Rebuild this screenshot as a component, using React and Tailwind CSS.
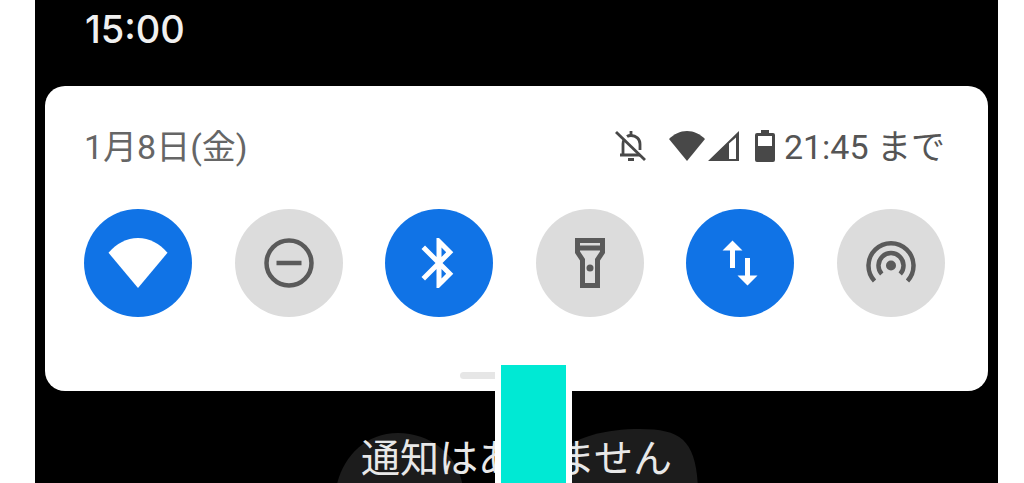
import React from 'react';

const tiles = [
  {
    id: 'wifi',
    label: 'Wi-Fi',
    active: true,
    icon: <path d="M12 22L.2 7.9C3.4 4.2 7.4 2 12 2s8.6 2.2 11.8 5.9L12 22z" />,
  },
  {
    id: 'dnd',
    label: 'サイレント モード',
    active: false,
    icon: (
      <g fill="none" stroke="currentColor" strokeWidth="1.8">
        <circle cx="12" cy="12" r="9" />
        <path d="M7 12h10" />
      </g>
    ),
  },
  {
    id: 'bluetooth',
    label: 'Bluetooth',
    active: true,
    icon: (
      <path d="M17.71 7.71L12 2h-1v7.59L6.41 5 5 6.41 10.59 12 5 17.59 6.41 19 11 14.41V22h1l5.71-5.71-4.3-4.29 4.3-4.29zM13 5.83l1.88 1.88L13 9.59V5.83zm1.88 10.46L13 18.17v-3.76l1.88 1.88z" />
    ),
  },
  {
    id: 'flashlight',
    label: 'ライト',
    active: false,
    icon: (
      <>
        <path d="M6 2v6l2 3v11h8V11l2-3V2H6zm10 2v1H8V4h8zm-2 6.4V20h-4v-9.6L8 7.39V7h8v.39l-2 3.01z" />
        <circle cx="12" cy="14" r="1.4" />
      </>
    ),
  },
  {
    id: 'data',
    label: 'モバイルデータ',
    active: true,
    icon: <path d="M16 17.01V10h-2v7.01h-3L15 21l4-3.99h-3zM9 3L5 6.99h3V14h2V6.99h3L9 3z" />,
  },
  {
    id: 'hotspot',
    label: 'アクセス ポイント',
    active: false,
    icon: (
      <>
        <circle cx="12" cy="13" r="2" />
        <path
          fill="none"
          stroke="currentColor"
          strokeWidth="1.8"
          d="M8.3 16.4a5 5 0 1 1 7.4 0M5.4 19.2a9 9 0 1 1 13.2 0"
        />
      </>
    ),
  },
];

const StatusIcons = () => (
  <div className="flex items-center pb-[2px] text-[#484848]">
    <svg className="mr-5 h-9 w-9" viewBox="0 0 36 36" fill="none" stroke="currentColor" strokeWidth="2.8">
      <path d="M3 4l29 28" />
      <path d="M7 27h20M10 26V16c0-2 .6-3.6 1.6-4.8M14 8.5c1-.7 2.400-1 4-1 5 0 9 3.500 9 8.500v6" />
      <path d="M18 3v5M15 31.5h6" />
    </svg>
    <svg className="mr-[3px] h-[30px] w-9" viewBox="0 0 36 30" fill="currentColor">
      <path d="M18 30L0 8C5 3 11 0 18 0s13 3 18 8L18 30z" />
    </svg>
    <svg className="mr-4 h-[30px] w-[31px]" viewBox="0 0 31 30" fill="currentColor">
      <path fillRule="evenodd" d="M0 30L31 0v30H0zM21 12.5V28h7V6.5L21 12.5z" />
    </svg>
    <svg className="mr-[9px] h-8 w-5" viewBox="0 0 20 32" fill="currentColor">
      <path fillRule="evenodd" d="M6 0h8v3h4a2 2 0 0 1 2 2v25a2 2 0 0 1-2 2H2a2 2 0 0 1-2-2V5a2 2 0 0 1 2-2h4V0zM3 6v10h14V6H3z" />
    </svg>
  </div>
);

const QuickTile = ({ tile }) => (
  <button
    type="button"
    aria-label={tile.label}
    aria-pressed={tile.active}
    className={`flex h-[108px] w-[108px] shrink-0 items-center justify-center rounded-full ${
      tile.active ? 'bg-[#1073e6] text-white' : 'bg-[#dcdcdc] text-[#5a5a5a]'
    }`}
  >
    <svg className="h-[60px] w-[60px]" viewBox="0 0 24 24" fill="currentColor">
      {tile.icon}
    </svg>
  </button>
);

const App = () => {
  return (
    <div className="h-screen overflow-hidden bg-white pl-[35px] pr-[26px] font-['Roboto','Noto_Sans_CJK_JP',sans-serif]">
      <div className="relative h-full overflow-hidden bg-black px-[10px]">
        <header className="h-[86px] px-10 pt-[9px]">
          <time className="block font-['Inter',sans-serif] text-[38px] leading-[40px] font-medium text-[#f0f0f0]">15:00</time>
        </header>

        <section className="rounded-[20px] bg-white pt-[39px] pr-[43px] pb-3 pl-[39px]">
          <div className="flex h-11 items-center justify-between text-[34px] leading-[44px] text-[#666]">
            <p>1月8日(金)</p>
            <div className="flex items-center">
              <StatusIcons />
              <p className="text-[#555]">21:45 まで</p>
            </div>
          </div>
          <div className="mt-10 flex justify-between">
            {tiles.map((tile) => (
              <QuickTile key={tile.id} tile={tile} />
            ))}
          </div>
          <div className="mx-auto mt-[55px] h-[7px] w-[110px] rounded-sm bg-[#e6e6e6]" />
        </section>

        <div className="relative text-center">
          {/* faded shapes behind the empty message */}
          <svg className="absolute top-[38px] left-1/2 -ml-[181px]" width="364" height="60" viewBox="0 0 364 60" fill="#1c1c1c">
            <path d="M0 60C5 30 28 4 62 4s62 24 65 56H0z" />
            <path d="M230 60V20c10-12 40-20 74-20 42 0 56 12 58 60H230z" />
          </svg>
          <p className="relative pt-10 text-[39px] leading-[56px] text-[#e8e8e8]">通知はありません</p>
        </div>

        {/* swipe indicator */}
        <div className="absolute top-[359px] bottom-0 left-1/2 -ml-[22px] w-[77px] border-x-[6px] border-t-[6px] border-white bg-[#00e9d4]" />
      </div>
    </div>
  );
};

export default App;
